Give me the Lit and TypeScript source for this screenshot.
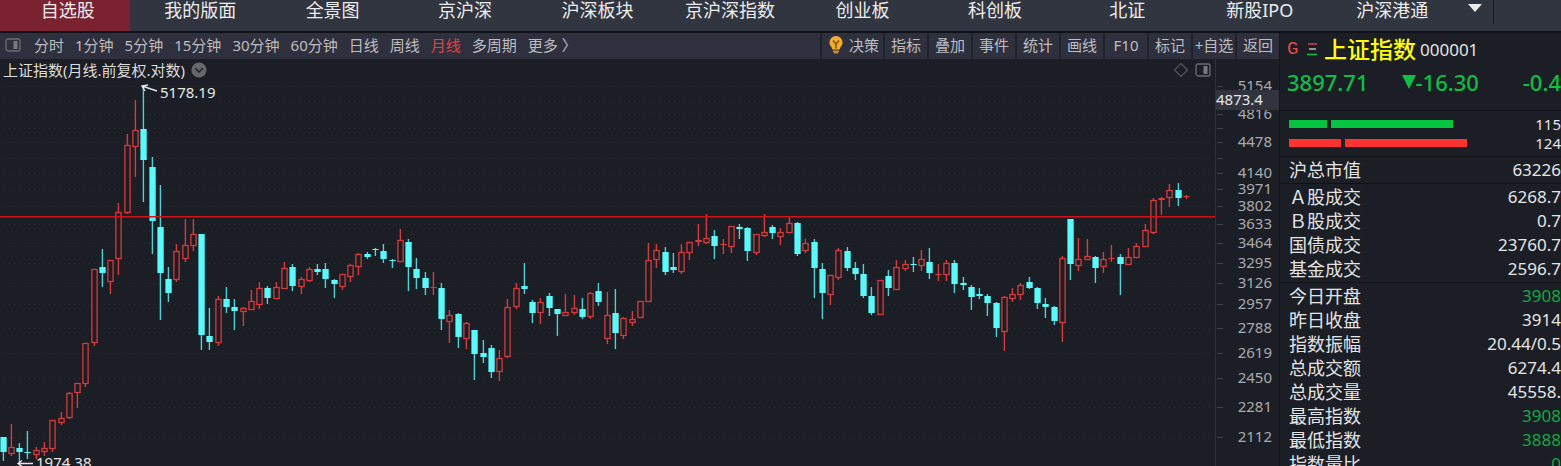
import { LitElement, html, svg, css } from "lit";
import { customElement } from "lit/decorators.js";
import { classMap } from "lit/directives/class-map.js";

const TABS = ["自选股", "我的版面", "全景图", "京沪深", "沪深板块", "京沪深指数", "创业板", "科创板", "北证", "新股IPO", "沪深港通"];
const PERIODS = ["分时", "1分钟", "5分钟", "15分钟", "30分钟", "60分钟", "日线", "周线", "月线", "多周期", "更多 〉"];
const TOOLS = ["指标", "叠加", "事件", "统计", "画线", "F10", "标记", "+自选", "返回"];

/* Horizontal grid rows; the label is empty on rows without a printed price. */
const SCALE: [number, string][] = [
  [86, "5154"], [101, ""], [114, "4816"], [128, ""], [142, "4478"], [158, ""], [173, "4140"],
  [189, "3971"], [206, "3802"], [224, "3633"], [243, "3464"], [263, "3295"], [283, "3126"],
  [304, "2957"], [328, "2788"], [353, "2619"], [378, "2450"], [407, "2281"], [437, "2112"],
];

/* One candle per month: direction, wick top, body top, body bottom, wick bottom. */
const CANDLES = `
c437,437,452,461 r424,447,453,456 c443,448,452,462 c431,452,453,459 r447,450,454,459 r442,448,451,456
r420,420,448,452 r412,418,422,425 r392,393,417,419 r383,383,392,408 r343,343,383,387 r269,269,342,346
c249,267,273,287 r260,260,281,294 r203,212,258,275 r134,145,212,214 r100,130,146,177 c86,129,160,202
c157,167,221,254 c185,227,273,320 c267,279,293,302 r244,251,279,282 r219,245,258,262 r219,234,245,251
c234,234,335,350 c308,336,342,350 r296,299,342,346 c287,299,307,313 c299,307,311,330 r307,308,311,326
r290,301,309,310 r282,288,304,309 c286,288,298,304 r282,287,298,298 r262,268,288,288 c264,267,286,291
r277,279,286,294 r267,269,280,282 c264,269,272,275 c263,269,279,288 c279,280,284,298 r274,274,286,290
r264,265,276,282 r253,254,266,275 c252,254,257,259 c248,249,250,256 c244,251,259,263 c259,260,261,268
r229,240,261,261 c239,242,267,291 c258,269,278,289 c272,278,288,295 r272,287,288,295 c283,288,319,330
r310,315,321,343 c313,314,337,348 r322,323,338,349 c330,330,354,380 c340,353,357,363 c345,348,372,378
r350,358,371,381 r299,307,356,358 r283,288,306,309 c263,286,289,294 c300,302,313,323 r298,302,312,324
c293,296,308,316 c309,309,314,336 r294,312,315,315 r295,308,312,315 c298,309,317,319 r292,293,316,319
c283,291,302,306 r292,315,338,344 c289,313,333,349 r317,318,335,339 r311,319,322,326 r301,301,317,317
r243,260,301,302 r244,250,259,268 c247,252,272,275 c253,267,270,273 r244,252,271,274 r242,242,252,260
r224,240,242,246 r214,238,242,244 c230,236,246,259 r239,244,245,254 r226,226,246,253 c224,227,229,239
c227,228,251,261 r234,234,252,255 r214,232,235,237 c225,227,233,239 r228,232,236,245 r217,223,232,232
c222,223,254,256 r239,243,250,253 c239,242,268,298 c263,269,293,319 r275,275,294,305 r248,250,277,280
c247,251,268,271 c262,268,274,280 c264,274,296,298 c287,296,313,315 r280,280,314,314 c270,276,288,296
r260,267,289,290 r260,264,268,271 c257,264,265,272 r250,259,265,271 c248,262,273,279 r264,274,275,281
r260,263,274,281 c260,263,284,293 c277,283,285,290 c285,287,297,310 c288,294,296,299 c294,296,303,316
c302,303,328,337 r296,297,331,351 r288,294,298,302 r283,285,294,300 c277,282,288,289 c287,288,303,309
c298,304,307,318 c306,307,321,325 r256,258,322,342 c219,219,264,280 r238,259,265,271 r239,256,259,260
c256,257,268,283 r252,259,266,273 r245,258,259,262 c254,257,264,295 r248,257,264,264 r243,246,257,257
r224,230,246,246 r198,200,232,234 r197,198,200,215 r184,190,197,207 c183,190,198,206 r195,196,197,199
`.trim().split(/\s+/).map((s) => ({ up: s[0] === "r", v: s.slice(1).split(",").map(Number) }));

const STATS: [string, string, boolean?][][] = [
  [["沪总市值", "63226"]],
  [["Ａ股成交", "6268.7"], ["Ｂ股成交", "0.7"], ["国债成交", "23760.7"], ["基金成交", "2596.7"]],
  [
    ["今日开盘", "3908", true], ["昨日收盘", "3914"], ["指数振幅", "20.44/0.5"], ["总成交额", "6274.4"],
    ["总成交量", "45558."], ["最高指数", "3908", true], ["最低指数", "3888", true], ["指数量比", "0", true],
  ],
];

const FONT = css`"Noto Sans", "Noto Sans CJK SC", sans-serif`;

const panelIcon = html`<svg class="panel-icon" viewBox="0 0 16 14" width="16" height="14" aria-hidden="true">
  <rect x="1" y="1" width="14" height="12" rx="2" fill="none" stroke="#6b6c72" stroke-width="1.3" />
  <rect x="8.5" y="3" width="4" height="8" fill="#77787d" />
</svg>`;

@customElement("market-chart")
class MarketChart extends LitElement {
  static styles = css`
    :host { display: block; font-family: ${FONT}; }
    .head { display: flex; height: 24px; }
    .title { display: flex; flex: 1; align-items: center; gap: 6px; padding: 0 4px 2px 3px; border-right: 1px solid #2e303b; }
    h1 { margin: 0; font-size: 15px; font-weight: 400; line-height: 22px; color: #dcdcdc; white-space: nowrap; }
    button { display: flex; padding: 0; border: 0; background: none; cursor: pointer; }
    .push { margin-left: auto; }
    .scale-top { width: 63px; }
    .plot { display: block; width: 100%; height: auto; overflow: visible; }
    .grid { stroke: #2a2c34; stroke-width: 1; stroke-dasharray: 1 4; }
    .tick { stroke: #3d3f49; stroke-width: 1; }
    .axis { stroke: #2e303b; stroke-width: 1; }
    .price { fill: #a9aaad; font-size: 15px; text-anchor: end; }
    .cursor-box { fill: #31343f; }
    .cursor-text, .mark { fill: #e6e6e6; font-size: 15px; }
    .arrow { fill: none; stroke: #e6e6e6; stroke-width: 1.4; }
    .level { stroke: #cf1418; stroke-width: 1.4; }
    .up-body { fill: #1b1e25; stroke: #d93a3b; stroke-width: 1.3; }
    .up { fill: #d93a3b; }
    .down { fill: #54fcfc; }
    .down-wick { fill: #4bd3d5; }
  `;

  candle(c: { up: boolean; v: number[] }, i: number) {
    const x = Math.round(2.6 + i * 8.275);
    const [high, top, bottom, low] = c.v;
    const wick = svg`<rect class=${c.up ? "up" : "down-wick"} x=${x - 0.3} y=${high} width="1.4" height=${Math.max(1, low - high)} />`;
    if (!c.up) {
      return svg`${wick}<rect class="down" x=${x - 2.6} y=${top} width="6.3" height=${bottom - top} />`;
    }
    return bottom - top < 3
      ? svg`${wick}<rect class="up" x=${x - 2.6} y=${top} width="6.3" height=${bottom - top} />`
      : svg`${wick}<rect class="up-body" x=${x - 2.1} y=${top + 0.5} width="5.2" height=${bottom - top} />`;
  }

  render() {
    return html`
      <div class="head">
        <div class="title">
          <h1>上证指数(月线.前复权.对数)</h1>
          <button aria-label="指标菜单">
            <svg viewBox="0 0 16 16" width="16" height="16"><circle cx="8" cy="8" r="7.6" fill="#66676a" /><path d="M4.2 6.3 8 10l3.8-3.7" fill="none" stroke="#1f2126" stroke-width="1.5" /></svg>
          </button>
          <button class="push" aria-label="标记点">
            <svg viewBox="0 0 16 16" width="16" height="16"><path d="M8 1.5 14.5 8 8 14.5 1.5 8Z" fill="none" stroke="#56575d" stroke-width="1.2" /></svg>
          </button>
          <button aria-label="侧栏">${panelIcon}</button>
        </div>
        <div class="scale-top"></div>
      </div>
      <svg class="plot" viewBox="0 83 1279 383" role="img" aria-label="上证指数月线">
        ${SCALE.map(([y]) => svg`<line class="grid" x1="4" x2="1214" y1=${y + 0.5} y2=${y + 0.5} />`)}
        <line class="axis" x1="1215.5" x2="1215.5" y1="83" y2="466" />
        ${SCALE.map(([y, label]) => svg`
          <line class="tick" x1="1217" x2="1223" y1=${y + 0.5} y2=${y + 0.5} />
          <text class="price" x="1272" y=${y + 5}>${label}</text>`)}
        ${CANDLES.map((c, i) => this.candle(c, i))}
        <line class="level" x1="0" x2="1215" y1="216.7" y2="216.7" />
        <rect class="cursor-box" x="1216" y="90" width="63" height="20" />
        <text class="cursor-text" x="1216" y="105">4873.4</text>
        <path class="arrow" d="M157 91 142 86M148 85 142 86 145 91" />
        <text class="mark" x="160" y="98">5178.19</text>
        <path class="arrow" d="M33 463.500H18M22 460.500 18 463.500 22 466.500" />
        <text class="mark" x="36" y="468">1974.38</text>
      </svg>
    `;
  }
}

@customElement("quote-panel")
class QuotePanel extends LitElement {
  static styles = css`
    :host { display: block; font-family: ${FONT}; color: #e4e4e4; }
    .head { display: flex; flex-direction: column; padding-left: 7px; height: 77px; }
    .name { display: flex; align-items: center; height: 32px; white-space: nowrap; }
    .flag { width: 14px; font-family: "Liberation Mono", monospace; font-size: 19px; color: #e04a4a; }
    .bars-icon { margin: 0 7px 0 6px; }
    h2 { margin: 0 4px 0 0; font-size: 23px; line-height: 32px; font-weight: 500; color: #ff0; }
    .code { font-size: 17px; }
    .quote { display: flex; align-items: center; height: 34px; font-size: 22px; font-weight: 500; line-height: 34px; color: #0cbf45; white-space: nowrap; }
    .change { display: flex; align-items: center; margin-left: 33px; }
    .percent { margin-left: auto; }
    .breadth { display: grid; gap: 1px; padding: 4px 0; border-top: 1px solid #101218; font-size: 15px; line-height: 18px; }
    .breadth-row { display: flex; align-items: center; padding-left: 9px; }
    .track { display: flex; flex: 1; gap: 4px; height: 8px; margin-right: 8px; }
    .fall { background: #02c43f; }
    .rise { background: #ff3232; }
    .block { padding: 1px 0; border-top: 1px solid #101218; }
    table { width: 100%; border-collapse: collapse; font-size: 17px; line-height: 24px; }
    th, td { padding: 0; white-space: nowrap; }
    th { padding-left: 9px; font-size: 18px; font-weight: 400; text-align: left; }
    td { text-align: right; }
    .green { color: #12a844; }
  `;

  bar(kind: string, parts: number[], value: string) {
    return html`<div class="breadth-row">
      <div class="track">${parts.map((p) => html`<div class=${kind} style="width:${p}%"></div>`)}</div>
      <span>${value}</span>
    </div>`;
  }

  render() {
    return html`
      <div class="head">
        <div class="name">
          <span class="flag">G</span>
          <svg class="bars-icon" viewBox="0 0 10 14" width="10" height="14" aria-hidden="true">
            <path d="M1 2h9" stroke="#d04848" stroke-width="1.5" /><path d="M2 7h7" stroke="#bbb" stroke-width="1.5" /><path d="M0 12.500h10" stroke="#0cbf45" stroke-width="1.5" />
          </svg>
          <h2>上证指数</h2>
          <span class="code">000001</span>
        </div>
        <div class="quote">
          <span>3897.71</span>
          <span class="change"><svg viewBox="0 0 14 14" width="14" height="14" aria-hidden="true"><path d="M0 0h14L7 14Z" fill="#0cbf45" /></svg>-16.30</span>
          <span class="percent">-0.4</span>
        </div>
      </div>
      <div class="breadth">
        ${this.bar("fall", [16, 51], "115")}
        ${this.bar("rise", [22, 51], "124")}
      </div>
      ${STATS.map((rows) => html`<div class="block"><table>
        ${rows.map(([label, value, green]) => html`<tr><th scope="row">${label}</th><td class=${classMap({ green: !!green })}>${value}</td></tr>`)}
      </table></div>`)}
    `;
  }
}

@customElement("app-root")
class AppRoot extends LitElement {
  static styles = css`
    :host { display: flex; flex-direction: column; height: 100vh; overflow: hidden; background: #1b1e25; font-family: ${FONT}; }
    button { font: inherit; color: inherit; background: none; border: 0; padding: 0; cursor: pointer; white-space: nowrap; }
    .nav { display: flex; flex: none; height: 31px; background: #31353f; border-bottom: 2px solid #11131a; }
    .tabs { display: flex; flex: 1; }
    .tab { flex: 1 1 0; min-width: 0; margin-right: 2px; padding: 0 0 11px 5px; font-size: 18px; line-height: 20px; text-align: center; text-decoration: none; color: #ececec; white-space: nowrap; }
    .tab.on { background: #7b2230; }
    .nav-end { display: flex; width: 104px; align-items: flex-start; }
    .more { display: flex; width: 37px; height: 24px; padding: 4px 0 0 11px; border-right: 1px solid #14161c; box-sizing: border-box; }
    .body { display: flex; flex: 1; min-height: 0; }
    .main { flex: 1; min-width: 0; border-right: 1px solid #14161c; }
    .toolbar { display: flex; height: 26px; background: #2f303d; color: #bdbdc0; font-size: 15px; line-height: 24px; }
    .toolbar button { padding-bottom: 2px; }
    .periods { display: flex; flex: 1; align-items: center; gap: 11px; padding-left: 5px; }
    .periods .first { display: flex; margin-right: 2px; }
    .now { color: #e04347; }
    .tool { width: 44px; border-left: 2px solid #20222b; box-sizing: border-box; overflow: hidden; text-align: center; }
    .tool.wide { display: flex; width: 63px; align-items: center; gap: 6px; padding-left: 7px; }
    .side { width: 281px; flex: none; overflow: hidden; }
  `;

  render() {
    return html`
      <nav class="nav">
        <div class="tabs">${TABS.map((t, i) => html`<a href="#" class=${classMap({ tab: true, on: i === 0 })}>${t}</a>`)}</div>
        <div class="nav-end">
          <button class="more" aria-label="更多版面"><svg viewBox="0 0 14 8" width="14" height="8"><path d="M0 0h14L7 8Z" fill="#ececec" /></svg></button>
        </div>
      </nav>
      <div class="body">
        <main class="main">
          <div class="toolbar">
            <div class="periods">
              <button class="first" aria-label="布局">${panelIcon}</button>
              ${PERIODS.map((p) => html`<button class=${classMap({ now: p === "月线" })}>${p}</button>`)}
            </div>
            <button class="tool wide">
              <svg viewBox="0 0 14 18" width="14" height="18" aria-hidden="true">
                <path d="M7 0a6.600 6.600 0 0 1 6.600 6.600c0 3-2.400 4-3 6.900H3.400C2.800 10.600.4 9.600.4 6.600A6.600 6.600 0 0 1 7 0Z" fill="#f2ad2e" />
                <path d="M4 4.500 7 8l3-3.500M7 8v4.500" fill="none" stroke="#8a5410" stroke-width="1.500" />
                <path d="M4 14.500h6v1.200L8.500 17.500h-3L4 15.700Z" fill="#d98b1c" />
              </svg>决策
            </button>
            ${TOOLS.map((t) => html`<button class="tool">${t}</button>`)}
          </div>
          <market-chart></market-chart>
        </main>
        <aside class="side"><quote-panel></quote-panel></aside>
      </div>
    `;
  }
}
